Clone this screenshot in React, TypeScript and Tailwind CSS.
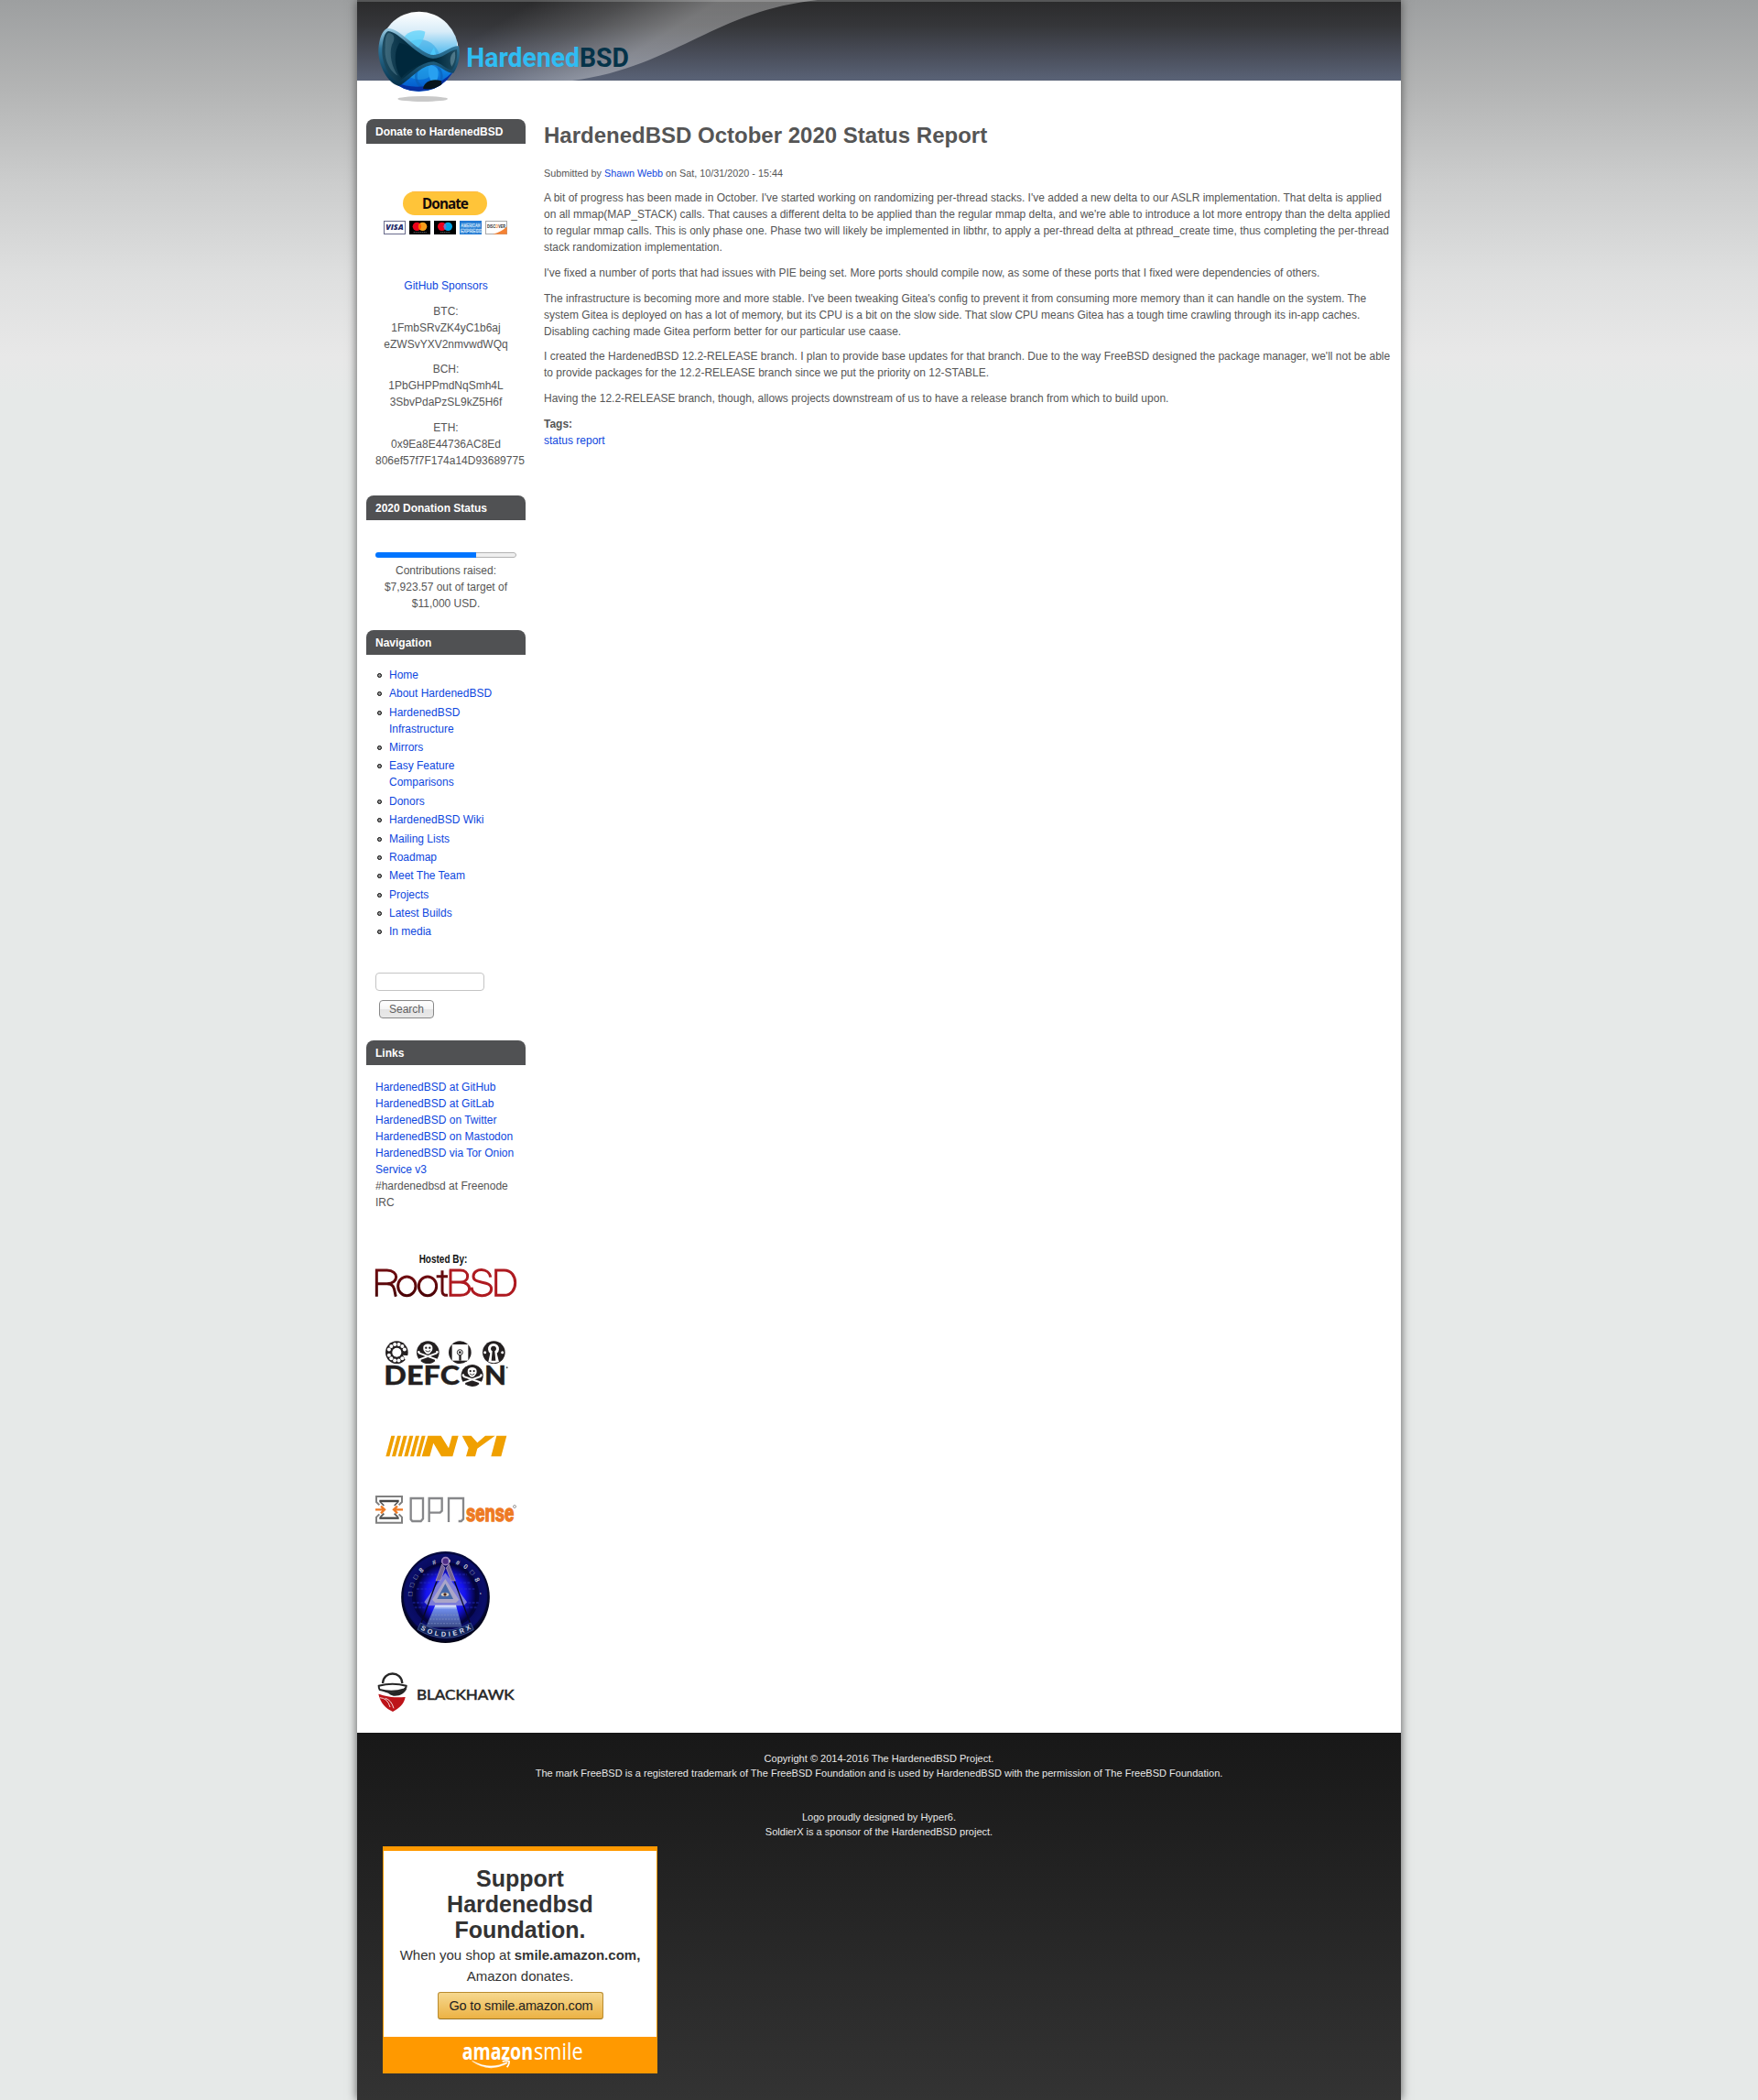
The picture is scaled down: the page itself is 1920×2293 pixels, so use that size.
import React from "react";

const BLOCK = "block w-[174px] overflow-visible";

function Heading({ children }: { children: React.ReactNode }) {
  return (
    <h2 className="h-[27px] rounded-t-lg bg-[#505153] px-2.5 pt-[5px] text-[12px] font-bold leading-[18px] text-white">
      {children}
    </h2>
  );
}

function A({ children }: { children: React.ReactNode }) {
  return (
    <a href="#" className="text-[#0d46de]">
      {children}
    </a>
  );
}

function Skull({ x, y, s = 1 }: { x: number; y: number; s?: number }) {
  return (
    <g transform={`translate(${x} ${y}) scale(${s})`}>
      <circle r="37" fill="#231f20" />
      <g stroke="#fff" strokeWidth="6" strokeLinecap="round">
        <path d="M-28 3 L28 23" />
        <path d="M28 3 L-28 23" />
      </g>
      <g fill="#fff">
        <circle cx="-30" cy="-1" r="4" />
        <circle cx="30" cy="-1" r="4" />
        <circle cx="-27" cy="26" r="4" />
        <circle cx="27" cy="26" r="4" />
        <path d="M-15 -16 C-15 -31 15 -31 15 -16 C16 -6 12 -4 9 0 C5 7 -5 7 -9 0 C-12 -4 -16 -6 -15 -16Z" />
      </g>
      <circle cx="-6" cy="-15" r="3.5" fill="#231f20" />
      <circle cx="6" cy="-15" r="3.5" fill="#231f20" />
      <path d="M-8 -6 Q0 2 8 -6" stroke="#231f20" strokeWidth="2.5" fill="none" />
    </g>
  );
}

function HeaderSwoosh() {
  return (
    <svg className="absolute inset-0" width="1140" height="88" viewBox="390 0 1140 88">
      <defs>
        <linearGradient id="sw" gradientUnits="userSpaceOnUse" x1="585" y1="0" x2="640" y2="90">
          <stop offset="0" stopColor="#fff" stopOpacity="0" />
          <stop offset="0.5" stopColor="#fff" stopOpacity="0.14" />
          <stop offset="1" stopColor="#fff" stopOpacity="0.34" />
        </linearGradient>
      </defs>
      <path d="M390 0 H893 C780 12 735 74 625 88 H390Z" fill="url(#sw)" />
    </svg>
  );
}

function Logo() {
  return (
    <svg className="relative block" width="300" height="120" viewBox="0 0 900 360">
      <defs>
        <linearGradient id="ball" x1="0" y1="0" x2="0" y2="1">
          <stop offset="0" stopColor="#fff" />
          <stop offset="0.25" stopColor="#d8ecf8" />
          <stop offset="0.48" stopColor="#6cc4f0" />
          <stop offset="0.7" stopColor="#128be6" />
          <stop offset="1" stopColor="#0052c8" />
        </linearGradient>
        <linearGradient id="visor" x1="0" y1="0" x2="1" y2="0">
          <stop offset="0" stopColor="#1f4c61" />
          <stop offset="0.3" stopColor="#062f43" />
          <stop offset="0.7" stopColor="#00283b" />
          <stop offset="1" stopColor="#1f4c61" />
        </linearGradient>
        <linearGradient id="rim" x1="0" y1="0" x2="0" y2="1">
          <stop offset="0" stopColor="#9ccbe2" />
          <stop offset="0.35" stopColor="#2e7397" />
          <stop offset="1" stopColor="#04304a" />
        </linearGradient>
        <clipPath id="ballclip">
          <ellipse cx="173" cy="169" rx="129" ry="131" />
        </clipPath>
      </defs>
      <ellipse cx="185" cy="324" rx="82" ry="9" fill="#c9c9c9" />
      <ellipse cx="173" cy="169" rx="129" ry="131" fill="url(#ball)" />
      <g clipPath="url(#ballclip)">
        <circle cx="175" cy="195" r="66" fill="#2aa5e6" opacity="0.5" />
        <path d="M118 135 C125 105 165 92 193 104 C190 130 175 150 155 172Z" fill="#57d2fb" opacity="0.7" />
        <path d="M222 155 L232 192 L205 186Z" fill="#4cc8fb" />
        <path d="M205 214 C200 245 210 268 222 275 C240 260 240 230 225 210Z" fill="#28a0f0" />
        <circle cx="205" cy="250" r="42" fill="none" stroke="#0a5bb2" strokeWidth="8" opacity="0.6" />
        <path d="M50 240 C90 300 230 320 296 230 L300 310 H60Z" fill="none" stroke="#0630a0" strokeWidth="14" />
        <path d="M284 82 C302 110 304 140 300 165" fill="none" stroke="#fff" strokeWidth="9" opacity="0.75" />
        <path d="M186 290 C190 268 215 256 246 265 L248 278 C225 292 205 294 186 290Z" fill="#07151d" />
      </g>
      <path
        d="M68 93 C88 90 112 108 140 132 C170 158 200 180 220 180 C248 180 272 152 303 150 C310 178 303 215 286 239 C262 240 245 216 222 212 C175 214 145 262 108 281 C72 276 38 215 40 162 C42 128 52 100 68 93Z"
        fill="url(#rim)"
      />
      <path
        d="M72 102 C92 104 112 122 140 146 C168 170 196 190 219 192 C250 192 270 166 297 162 C300 186 294 212 281 230 C262 228 245 206 221 202 C172 204 142 246 106 268 C76 258 50 208 52 162 C54 130 60 106 72 102Z"
        fill="url(#visor)"
      />
      <path d="M110 140 C150 150 190 190 215 198 C170 210 140 225 115 255 C90 220 90 165 110 140Z" fill="#00283c" />
      <path d="M72 108 C94 108 96 128 84 146 C74 178 84 220 104 248 C78 236 58 196 62 156 C62 132 64 114 72 108Z" fill="#7fa9b8" opacity="0.32" />
      <path d="M290 168 C294 186 290 204 280 218 C270 200 276 176 290 168Z" fill="#9cc0cc" opacity="0.4" />
      <text
        x="328"
        y="219"
        fontFamily="Roboto, sans-serif"
        fontWeight="700"
        fontSize="90"
        textLength="533"
        lengthAdjust="spacingAndGlyphs"
        fill="#2fbdf3"
      >
        Hardened<tspan fill="#053349">BSD</tspan>
      </text>
    </svg>
  );
}

function Donate() {
  return (
    <svg className={BLOCK} height="54" viewBox="60 78 522 162">
      <rect x="180" y="87" width="276" height="78" rx="39" fill="#ffc439" />
      <path d="M210 88 H426" stroke="#ffb347" strokeWidth="2" />
      <text x="243" y="144" fontFamily="'Noto Sans', sans-serif" fontWeight="700" fontSize="46" textLength="153" lengthAdjust="spacing" fill="#150b0b">
        Donate
      </text>
      <rect x="118.500" y="184.500" width="69" height="42" fill="#fff" stroke="#6a6c8c" strokeWidth="3" />
      <text x="124" y="214" fontFamily="'Open Sans', sans-serif" fontWeight="800" fontStyle="italic" fontSize="25" textLength="58" lengthAdjust="spacingAndGlyphs" fill="#242a68">
        VISA
      </text>
      <rect x="201" y="183" width="69" height="45" fill="#000" />
      <circle cx="226" cy="202" r="14" fill="#eb001b" />
      <circle cx="245" cy="202" r="14" fill="#f79e1b" />
      <path d="M235.500 191.500 A14 14 0 0 1 235.500 212.500 A14 14 0 0 1 235.500 191.500Z" fill="#ff5f00" />
      <path d="M215 221.500 H258" stroke="#666" strokeWidth="3" strokeDasharray="4 1.500" />
      <rect x="282" y="183" width="72" height="45" fill="#000" />
      <circle cx="308" cy="202" r="14" fill="#eb001b" />
      <circle cx="328" cy="202" r="14" fill="#00a2e5" />
      <path d="M318 192 A14 14 0 0 1 318 212 A14 14 0 0 1 318 192Z" fill="#7375cf" />
      <path d="M303 221.500 H334" stroke="#666" strokeWidth="3" strokeDasharray="4 1.500" />
      <rect x="366" y="183" width="72" height="45" fill="#2178d2" />
      <g fontFamily="'Liberation Sans', sans-serif" fontWeight="700" fontSize="17" fill="#2178d2" stroke="#c9e2f8" strokeWidth="1.400">
        <text x="370" y="203" textLength="64" lengthAdjust="spacingAndGlyphs">AMERICAN</text>
        <text x="368" y="222" textLength="70" lengthAdjust="spacingAndGlyphs">EXPRESS</text>
      </g>
      <rect x="451.500" y="184.500" width="69" height="42" fill="#fff" stroke="#a8a8a8" strokeWidth="3" />
      <path d="M521 202 V227 H474 C495 222 510 214 521 202Z" fill="#f58233" />
      <text x="456" y="207" fontFamily="'Liberation Sans', sans-serif" fontWeight="700" fontSize="14" textLength="60" lengthAdjust="spacingAndGlyphs" fill="#2b2b2b">
        DISC<tspan fill="#f58233">O</tspan>VER
      </text>
    </svg>
  );
}

function RootBsd() {
  return (
    <svg className={`${BLOCK} mt-[43px]`} height="55" viewBox="60 495 522 165">
      <defs>
        <linearGradient id="rb1" x1="0" y1="0" x2="0" y2="1">
          <stop offset="0" stopColor="#6e0c10" />
          <stop offset="1" stopColor="#4a0306" />
        </linearGradient>
      </defs>
      <text x="233" y="537" fontFamily="'Liberation Sans', sans-serif" fontWeight="700" fontSize="37" textLength="158" lengthAdjust="spacingAndGlyphs" fill="#111">
        Hosted By:
      </text>
      <g fill="none" strokeWidth="9">
        <g stroke="url(#rb1)">
          <path d="M94 647 V561 H128 C168 561 168 605 128 605 H94 M128 605 C156 605 151 630 157 647" />
          <ellipse cx="193" cy="613" rx="29" ry="31" />
          <ellipse cx="261" cy="613" rx="29" ry="31" />
        </g>
        <path d="M290 581 H327 M309 562 V630 Q309 644 327 643" stroke="#650a0e" />
        <g stroke="#ae1a20">
          <path d="M336 561 V643 H368 C408 643 408 600 368 600 H336 M368 600 C400 600 400 561 368 561 H332" />
          <path d="M467 584 C463 552 412 552 411 581 C411 609 470 592 470 622 C469 653 407 652 405 617" />
          <path d="M485 561 V643 H512 C560 643 560 561 512 561Z" />
        </g>
      </g>
    </svg>
  );
}

function Defcon() {
  const holes = [200, 228, 256, 284, 312, 340, 48, 76, 104, 132, 160];
  return (
    <svg className={`${BLOCK} mt-10`} height="58" viewBox="60 60 522 174">
      <circle cx="160" cy="110" r="37" fill="#231f20" />
      <circle cx="160" cy="110" r="15" fill="#fff" />
      {holes.map((a) => (
        <circle
          key={a}
          cx={160 + 27 * Math.cos((a * Math.PI) / 180)}
          cy={110 + 27 * Math.sin((a * Math.PI) / 180)}
          r="6"
          fill="#fff"
        />
      ))}
      <path d="M180 119 L200 121 L190 138Z" fill="#fff" />
      <Skull x={262} y={110} />
      <circle cx="367" cy="110" r="37" fill="#231f20" />
      <rect x="341" y="84" width="53" height="53" fill="#fff" />
      <circle cx="367" cy="110" r="9" fill="#fff" stroke="#231f20" strokeWidth="3" />
      <circle cx="367" cy="110" r="4" fill="#231f20" />
      <path d="M364 119 H371 V137 H364Z" fill="#231f20" />
      <circle cx="478" cy="110" r="37" fill="#231f20" />
      <path d="M466 113 A18 18 0 1 1 488 113 L495 141 Q477 148 460 141Z" fill="#fff" />
      <path d="M473 106 A9 9 0 1 1 481 106 L484 137 H470Z" fill="#231f20" />
      <circle cx="449" cy="110" r="4.500" fill="#fff" />
      <circle cx="506" cy="110" r="4.500" fill="#fff" />
      <g fontFamily="Lato, sans-serif" fontWeight="900" fontSize="83" fill="#231f20" stroke="#231f20" strokeWidth="1">
        <text x="118" y="215" textLength="248" lengthAdjust="spacingAndGlyphs">DEFC</text>
        <text x="447" y="215" textLength="72" lengthAdjust="spacingAndGlyphs">N</text>
      </g>
      <circle cx="407" cy="186" r="40" fill="#fff" />
      <Skull x={407} y={186} s={0.98} />
      <circle cx="521" cy="160" r="3" fill="#555" />
    </svg>
  );
}

function Nyi() {
  return (
    <svg className={`${BLOCK} mt-[45px]`} height="32" viewBox="60 369 522 96">
      <g fill="#f0a000">
        {[0, 1, 2, 3, 4, 5].map((i) => (
          <path key={i} d={`M${142 + i * 20} 383 h12 l-18 68 h-12Z`} />
        ))}
        <path d="M262 383 H305 L330 424 L341 383 H362 L343 451 H306 L280 407 L268 451 H242Z" />
        <path d="M374 383 H404 L424 406 L450 383 H482 L424 425 L417 451 H387 L395 423Z" />
        <path d="M487 383 H520 L502 451 H469Z" />
      </g>
    </svg>
  );
}

function OpnSense() {
  return (
    <svg className={`${BLOCK} mt-[35px]`} height="37" viewBox="60 60 522 111">
      <g fill="none" strokeWidth="7">
        <path d="M103 100 L93 90 V72 H177 V90 L167 100 M103 130 L93 140 V158 H177 V140 L167 130" stroke="#808080" strokeWidth="6" />
        <path d="M103 87 H167 M103 143 H167" stroke="#444" />
        <path d="M106 90 L118 102 M164 90 L152 102 M106 140 L118 128 M164 140 L152 128" stroke="#555" strokeWidth="5" />
        <path d="M90 115 H118 M108 104 L120 115 L108 127 M180 115 H152 M162 104 L150 115 L162 127" stroke="#ee7a24" />
        <path d="M206 78 H246 V145 L239 153 H211 L206 147Z" stroke="#86878a" />
        <path d="M266 156 V78 H308 V119 L302 125 H268" stroke="#86878a" />
        <path d="M330 156 V78 H378 V146 L371 153 H362" stroke="#86878a" />
      </g>
      <text x="387" y="154" fontFamily="'Liberation Sans', sans-serif" fontWeight="700" fontSize="76" textLength="157" lengthAdjust="spacingAndGlyphs" fill="#ee7a24" stroke="#ee7a24" strokeWidth="4.500">
        sense
      </text>
      <circle cx="546" cy="105" r="4.500" fill="none" stroke="#888" strokeWidth="2.500" />
    </svg>
  );
}

function SoldierX() {
  return (
    <svg className={`${BLOCK} mt-[25px]`} height="104" viewBox="60 246 522 312">
      <defs>
        <radialGradient id="sx" cx="0.5" cy="0.48" r="0.52">
          <stop offset="0" stopColor="#3a45ff" />
          <stop offset="0.42" stopColor="#1512f0" />
          <stop offset="0.66" stopColor="#03033a" />
          <stop offset="0.86" stopColor="#050a50" />
          <stop offset="1" stopColor="#01020f" />
        </radialGradient>
        <linearGradient id="pyr" x1="0" y1="0" x2="0" y2="1">
          <stop offset="0" stopColor="#f4f7ff" />
          <stop offset="0.2" stopColor="#6d8be8" />
          <stop offset="1" stopColor="#3b4a86" />
        </linearGradient>
        <path id="arcTop" d="M211 398 A109 109 0 0 1 429 398" />
        <path id="arcBottom" d="M237 507 Q320 556 408 503" />
      </defs>
      <ellipse cx="319.500" cy="402" rx="145" ry="150" fill="url(#sx)" />
      <ellipse cx="319.500" cy="396" rx="124" ry="122" fill="none" stroke="#14189a" strokeWidth="27" opacity="0.35" />
      <path d="M212 420 H428 M218 436 H424 M225 375 H415 M235 355 H400 M245 328 H390" stroke="#2730c8" strokeWidth="6" strokeDasharray="9 4" opacity="0.4" />
      <path d="M319 322 L250 418 L262 430 H380 L390 418Z" fill="#8d8cd4" opacity="0.85" />
      <path d="M319 342 L276 410 L286 420 H354 L364 410Z" fill="#aaa5c8" />
      <path d="M319 358 L292 408 H345Z" fill="#4668a8" />
      <ellipse cx="318" cy="393" rx="13" ry="6" fill="#d8cfc0" />
      <circle cx="318" cy="393" r="5" fill="#4b2b22" />
      <path d="M286 428 H354 L374 500 H255Z" fill="url(#pyr)" />
      <path d="M275 460 H365 M268 474 H368 M262 488 H372" stroke="#8296c8" strokeWidth="4" strokeDasharray="6 4" opacity="0.5" />
      <path d="M310 290 L290 352 L240 486 M330 290 L350 352 L400 486" fill="none" stroke="#080828" strokeWidth="4" />
      <path d="M308 294 L288 348 L304 346 L318 306Z M331 294 L352 348 L338 348 L322 306Z" fill="#726393" stroke="#b8a4cc" strokeWidth="2" />
      <circle cx="320" cy="284" r="12" fill="#4d2d86" stroke="#9d83bf" strokeWidth="5" />
      <path d="M238 486 Q320 535 402 486 L412 508 Q320 562 228 508Z" fill="#10235a" stroke="#5366a6" strokeWidth="2" />
      <g fontFamily="'Liberation Sans', sans-serif" fontWeight="700">
        <text fontSize="22" fill="#bfc1cf">
          <textPath href="#arcTop" textLength="338">□□□8 #  ◖#0□8 -</textPath>
        </text>
        <text fontSize="22" fill="#d9dcea">
          <textPath href="#arcBottom" textLength="176">SOLDIERX</textPath>
        </text>
      </g>
    </svg>
  );
}

function Blackhawk() {
  return (
    <svg className={`${BLOCK} mt-7`} height="48" viewBox="60 642 522 144">
      <path d="M114 684 C116 642 176 642 178 684" fill="none" stroke="#262626" strokeWidth="7" />
      <path d="M101 692 Q146 680 191 692 Q191 700 184 703 Q146 716 104 705 Q101 700 101 692Z" fill="#fff" stroke="#262626" strokeWidth="6" />
      <path d="M106 704 Q148 722 193 700 C188 718 168 727 149 725 Q138 722 132 716 Q118 714 106 704Z" fill="#262626" />
      <path d="M100 719 C122 724 136 733 188 729 C184 752 168 766 147 777 C124 766 106 748 100 719Z" fill="#bd1419" />
      <path d="M104 731 Q130 732 138 762 M122 733 Q142 738 150 766" stroke="#fff" strokeWidth="2.500" fill="none" />
      <text x="225" y="738" fontFamily="Lato, sans-serif" fontWeight="400" fontSize="44" textLength="320" lengthAdjust="spacingAndGlyphs" fill="#262626" stroke="#262626" strokeWidth="1.500">
        BLACKHAWK
      </text>
    </svg>
  );
}

function AmazonSmile() {
  return (
    <svg className="block overflow-visible" width="160" height="40" viewBox="324 1032 480 120">
      <text x="374" y="1108" fontFamily="'Open Sans', sans-serif" fontWeight="700" fontSize="77" textLength="232" lengthAdjust="spacingAndGlyphs" fill="#fff">
        amazon
      </text>
      <text x="609" y="1108" fontFamily="'Open Sans', sans-serif" fontWeight="400" fontSize="76" textLength="161" lengthAdjust="spacingAndGlyphs" fill="#fff">
        smile
      </text>
      <path d="M407 1109 Q466 1142 521 1114 L524 1119 Q463 1153 406 1112Z" fill="#fff" stroke="#ff9900" strokeWidth="1" />
      <path d="M506 1113 Q520 1108 528 1112 Q530 1120 521 1132" fill="none" stroke="#fff" strokeWidth="5" />
    </svg>
  );
}

const NAV: string[] = [
  "Home",
  "About HardenedBSD",
  "HardenedBSD Infrastructure",
  "Mirrors",
  "Easy Feature Comparisons",
  "Donors",
  "HardenedBSD Wiki",
  "Mailing Lists",
  "Roadmap",
  "Meet The Team",
  "Projects",
  "Latest Builds",
  "In media",
];

const LINKS: string[] = [
  "HardenedBSD at GitHub",
  "HardenedBSD at GitLab",
  "HardenedBSD on Twitter",
  "HardenedBSD on Mastodon",
  "HardenedBSD via Tor Onion Service v3",
];

function Sidebar() {
  return (
    <aside className="w-[174px] shrink-0">
      <Heading>Donate to HardenedBSD</Heading>
      <div className="mt-[49px]">
        <Donate />
      </div>
      <div className="mt-[43px] flex w-[154px] flex-col gap-[9.6px] ml-2.5 text-center">
        <p>
          <A>GitHub Sponsors</A>
        </p>
        <p>
          BTC:
          <br />
          1FmbSRvZK4yC1b6aj
          <br />
          eZWSvYXV2nmvwdWQq
        </p>
        <p>
          BCH:
          <br />
          1PbGHPPmdNqSmh4L
          <br />
          3SbvPdaPzSL9kZ5H6f
        </p>
        <p>
          ETH:
          <br />
          0x9Ea8E44736AC8Ed
          <br />
          806ef57f7F174a14D93689775
        </p>
      </div>

      <div className="mt-[29.2px]">
        <Heading>2020 Donation Status</Heading>
      </div>
      <div className="mx-2.5 mt-[35px] text-center">
        <div className="flex h-1.5 overflow-hidden rounded-full">
          <div className="w-[110px] bg-[#0075ff]" />
          <div className="flex-1 rounded-r-full border border-l-0 border-[#b2b2b2] bg-[#efefef]" />
        </div>
        <p className="mt-[5px]">
          Contributions raised: $7,923.57 out of target of $11,000 USD.
        </p>
      </div>

      <div className="mt-5">
        <Heading>Navigation</Heading>
      </div>
      <ul className="mx-3 mt-[13.05px] flex h-[298px] flex-col gap-[2.36px]">
        {NAV.map((item) => (
          <li key={item} className="flex">
            <span className="mr-2 mt-[7px] size-[5px] shrink-0 rounded-full border-[1.5px] border-black bg-[#999]" />
            <span className="w-[124px]">
              <A>{item}</A>
            </span>
          </li>
        ))}
      </ul>

      <form className="ml-2.5 mt-[35.95px]">
        <input className="block h-5 w-[119px] rounded border border-[#c4c4c4] bg-white" />
        <button
          type="button"
          className="ml-1 mt-2.5 block h-5 w-[60px] rounded border border-[#888] bg-[linear-gradient(#fff_0%,#f5f5f5_50%,#e4e4e4_50%,#e9e9e9_100%)] text-[12px] leading-[18px] text-[#606060]"
        >
          Search
        </button>
      </form>

      <div className="mt-6">
        <Heading>Links</Heading>
      </div>
      <ul className="mx-2.5 mt-[15px]">
        {LINKS.map((l) => (
          <li key={l}>
            <A>{l}</A>
          </li>
        ))}
        <li>#hardenedbsd at Freenode IRC</li>
      </ul>

      <RootBsd />
      <Defcon />
      <Nyi />
      <OpnSense />
      <SoldierX />
      <Blackhawk />
    </aside>
  );
}

function Article() {
  return (
    <main className="w-[928px]">
      <h1 className="h-[52px] pt-px text-[24px] font-bold leading-[34px]">HardenedBSD October 2020 Status Report</h1>
      <p className="h-[25px] text-[10.8px] leading-[14px]">
        Submitted by <A>Shawn Webb</A> on Sat, 10/31/2020 - 15:44
      </p>
      <div className="flex flex-col gap-[9.8px]">
        <p>
          A bit of progress has been made in October. I've started working on randomizing per-thread stacks. I've added a
          new delta to our ASLR implementation. That delta is applied on all mmap(MAP_STACK) calls. That causes a
          different delta to be applied than the regular mmap delta, and we're able to introduce a lot more entropy than
          the delta applied to regular mmap calls. This is only phase one. Phase two will likely be implemented in
          libthr, to apply a per-thread delta at pthread_create time, thus completing the per-thread stack randomization
          implementation.
        </p>
        <p>
          I've fixed a number of ports that had issues with PIE being set. More ports should compile now, as some of
          these ports that I fixed were dependencies of others.
        </p>
        <p>
          The infrastructure is becoming more and more stable. I've been tweaking Gitea's config to prevent it from
          consuming more memory than it can handle on the system. The system Gitea is deployed on has a lot of memory,
          but its CPU is a bit on the slow side. That slow CPU means Gitea has a tough time crawling through its in-app
          caches. Disabling caching made Gitea perform better for our particular use caase.
        </p>
        <p>
          I created the HardenedBSD 12.2-RELEASE branch. I plan to provide base updates for that branch. Due to the way
          FreeBSD designed the package manager, we'll not be able to provide packages for the 12.2-RELEASE branch since
          we put the priority on 12-STABLE.
        </p>
        <p>
          Having the 12.2-RELEASE branch, though, allows projects downstream of us to have a release branch from which to
          build upon.
        </p>
        <div>
          <p className="font-bold">Tags:</p>
          <A>status report</A>
        </div>
      </div>
    </main>
  );
}

export default function App() {
  return (
    <div className="h-[2293px] overflow-hidden bg-[#e6e9e8] bg-[linear-gradient(#9d9fa0_0px,#b4b5b5_100px,#cccdcd_200px,#dedfdf_300px,#e8e8e8_390px,#e6e9e8_430px)] font-['Liberation_Sans',Arial,sans-serif] text-[12px] leading-[18px] text-[#555]">
      <div className="mx-auto flex h-full w-[1140px] flex-col bg-white shadow-[0_0_10px_#555]">
        <header className="relative h-[88px] shrink-0 border-t-2 border-[#555657] bg-[linear-gradient(#2b2b2c,#353639_30%,#484c58_65%,#5a6377)]">
          <div className="absolute inset-x-0 -top-0.5 h-[88px]">
            <HeaderSwoosh />
          </div>
          <div className="-mt-0.5 ml-2.5 h-[88px]">
            <Logo />
          </div>
        </header>

        <div className="flex h-[1804px] shrink-0 gap-5 px-2.5 pt-[42px]">
          <Sidebar />
          <Article />
        </div>

        <footer className="flex-1 bg-[linear-gradient(#181818,#333)] pt-5 text-center text-[11.04px] leading-4 text-[#e8e8e8]">
          <p>Copyright © 2014-2016 The HardenedBSD Project.</p>
          <p>
            The mark FreeBSD is a registered trademark of The FreeBSD Foundation and is used by HardenedBSD with the
            permission of The FreeBSD Foundation.
          </p>
          <p className="mt-8">Logo proudly designed by Hyper6.</p>
          <p>SoldierX is a sponsor of the HardenedBSD project.</p>

          <div className="ml-7 mt-2 flex h-[248px] w-[300px] flex-col border-x border-t-[5px] border-[#ff9900] bg-white text-[#333]">
            <div className="flex-1 pt-4">
              <h3 className="text-[25px] font-bold leading-7">
                Support
                <br />
                Hardenedbsd
                <br />
                Foundation.
              </h3>
              <p className="mt-0.5 text-[15px] leading-[23px]">
                When you shop at <b>smile.amazon.com,</b>
                <br />
                Amazon donates.
              </p>
              <button
                type="button"
                className="mx-auto mt-1.5 block h-[30px] w-[181px] rounded-[3px] border border-b-[#9a7424] border-[#b98b2f] bg-[linear-gradient(#f6d88f,#ecb244)] pl-0.5 text-[14.5px] leading-7 tracking-[-0.15px] text-[#222]"
              >
                Go to smile.amazon.com
              </button>
            </div>
            <div className="flex h-10 justify-center bg-[#ff9900]">
              <AmazonSmile />
            </div>
          </div>
        </footer>
      </div>
    </div>
  );
}
